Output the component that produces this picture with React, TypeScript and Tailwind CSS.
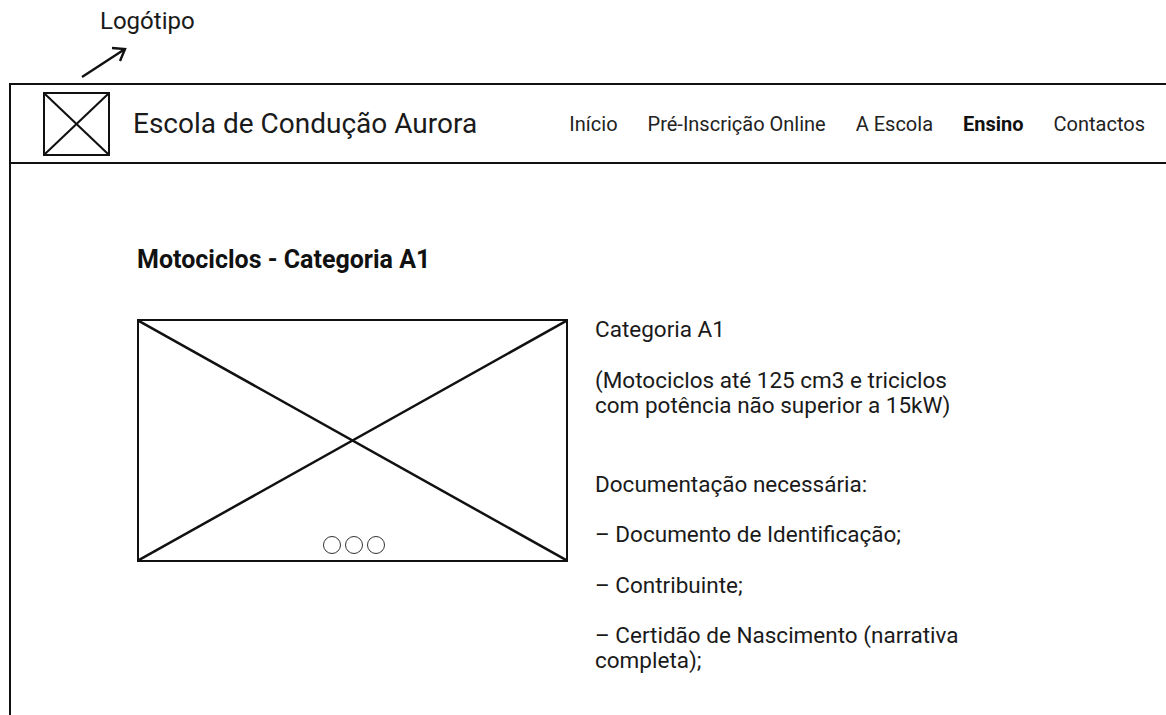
import React from "react";

const navItems = [
  { label: "Início" },
  { label: "Pré-Inscrição Online" },
  { label: "A Escola" },
  { label: "Ensino", active: true },
  { label: "Contactos" },
];

function CrossBox({ className, stroke = 2 }: { className: string; stroke?: number }) {
  return (
    <div className={"relative border-2 border-[#111] " + className}>
      <svg className="absolute inset-0 h-full w-full" preserveAspectRatio="none" viewBox="0 0 100 100">
        <line x1="0" y1="0" x2="100" y2="100" stroke="#111" strokeWidth={stroke} vectorEffect="non-scaling-stroke" />
        <line x1="100" y1="0" x2="0" y2="100" stroke="#111" strokeWidth={stroke} vectorEffect="non-scaling-stroke" />
      </svg>
    </div>
  );
}

export default function App() {
  return (
    <div className="flex min-h-screen flex-col bg-white text-[#1f1f1f]" style={{ fontFamily: "Roboto, 'Noto Sans', sans-serif" }}>
      {/* annotation */}
      <div className="relative h-[83px] shrink-0">
        <div className="pl-[100px] pt-[7px] text-[24px] leading-[28px] text-[#1a1a1a]">Logótipo</div>
        <svg className="absolute left-[78px] top-[42px]" width="54" height="40" viewBox="0 0 54 40">
          <line x1="4" y1="35" x2="47" y2="7" stroke="#111" strokeWidth="2.4" />
          <polyline points="34,6 47,7 42,19" fill="none" stroke="#111" strokeWidth="2.4" />
        </svg>
      </div>

      {/* wireframe page */}
      <div className="ml-[9px] flex-1 border-l-[2.5px] border-t-[2.5px] border-[#111]">
        <header className="flex h-[79px] items-center border-b-[2.5px] border-[#111] pl-[32px] pr-[21px]">
          <CrossBox className="h-[64px] w-[67px] shrink-0" stroke={2} />
          <div className="ml-[23px] text-[28px] leading-none text-[#1a1a1a]">Escola de Condução Aurora</div>
          <nav className="ml-auto flex items-center gap-[30px] text-[20px] text-[#222]">
            {navItems.map((item) => (
              <span key={item.label} className={item.active ? "font-bold text-[#111]" : ""}>
                {item.label}
              </span>
            ))}
          </nav>
        </header>

        <main className="pl-[126px] pt-[81px]">
          <h1 className="text-[25px] font-bold leading-[29px] text-[#111]">Motociclos - Categoria A1</h1>

          <div className="mt-[45px] flex items-start gap-[27px]">
            <div className="relative h-[243px] w-[431px] shrink-0">
              <CrossBox className="h-full w-full" stroke={2.5} />
              <div className="absolute bottom-[8px] left-0 right-0 flex justify-center gap-[4px] pl-[3px]">
                <span className="h-[18px] w-[18px] rounded-full border-[1.5px] border-[#333]" />
                <span className="h-[18px] w-[18px] rounded-full border-[1.5px] border-[#333]" />
                <span className="h-[18px] w-[18px] rounded-full border-[1.5px] border-[#333]" />
              </div>
            </div>

            <div className="-mt-[2px] text-[22.5px] leading-[25px] text-[#1a1a1a]">
              <p>Categoria A1</p>
              <p className="mt-[26px]">
                (Motociclos até 125 cm3 e triciclos
                <br />
                com potência não superior a 15kW)
              </p>
              <p className="mt-[54px]">Documentação necessária:</p>
              <p className="mt-[25px]">– Documento de Identificação;</p>
              <p className="mt-[26px]">– Contribuinte;</p>
              <p className="mt-[25px]">
                – Certidão de Nascimento (narrativa
                <br />
                completa);
              </p>
            </div>
          </div>
        </main>
      </div>
    </div>
  );
}
